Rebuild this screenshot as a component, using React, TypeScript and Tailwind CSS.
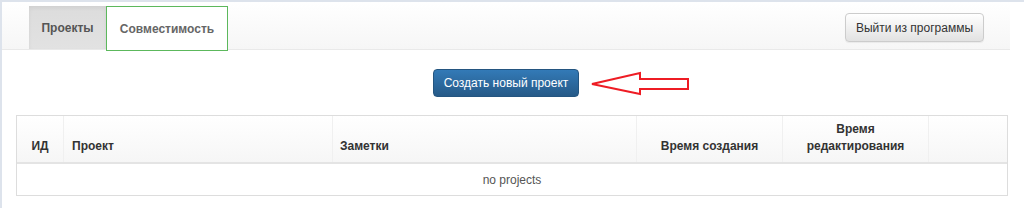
import React from "react";

export default function App() {
  return (
    <div
      className="w-[1024px] h-[208px] bg-white border-l-2 border-t-2 border-[#dde3ec] overflow-hidden"
      style={{ fontFamily: '"Liberation Sans", Arial, sans-serif' }}
    >
      <div className="w-[1008px]">
        {/* Navbar */}
        <div className="h-[48px] bg-gradient-to-b from-white to-[#f6f6f6] border-b border-[#e9e9e9] flex items-start pl-[27px] pr-[26px] pt-[4px]">
          <div className="h-[43px] w-[77px] bg-gradient-to-b from-[#dcdcdc] to-[#e2e2e2] flex items-center justify-center text-[12px] font-bold text-[#555] shadow-[inset_0_2px_4px_rgba(0,0,0,0.06)]">
            Проекты
          </div>
          <div className="h-[45px] w-[122px] border border-[#5cb85c] flex items-center justify-center text-[12px] font-bold text-[#666] bg-white">
            Совместимость
          </div>
          <div className="flex-1" />
          <button className="mt-[7px] h-[29px] w-[139px] rounded-[4px] border border-[#ccc] bg-gradient-to-b from-white to-[#e2e2e2] text-[12px] text-[#333] shadow-[0_1px_1px_rgba(0,0,0,0.06)]">
            Выйти из программы
          </button>
        </div>

        {/* Create button */}
        <div className="flex justify-center mt-[19px]">
          <div className="relative">
            <button className="h-[28px] w-[146px] rounded-[4px] border border-[#245580] bg-gradient-to-b from-[#337ab7] to-[#265a88] text-white text-[12px]">
              Создать новый проект
            </button>
            <svg
              className="absolute left-[157px] top-[1px]"
              width="104"
              height="28"
              viewBox="0 0 104 28"
            >
              <polygon
                points="2,14 50,3 50,9 98,9 98,19 50,19 50,24"
                fill="none"
                stroke="#ee1c24"
                strokeWidth="2"
                strokeLinejoin="miter"
              />
            </svg>
          </div>
        </div>

        {/* Table */}
        <div className="ml-[14px] mt-[18px] w-[992px] border border-[#dddddd]">
          <div className="flex h-[48px] bg-gradient-to-b from-white to-[#f6f6f6] border-b-2 border-[#e4e4e4] text-[12px] font-bold text-[#333] leading-[17px]">
            <div className="w-[47px] flex items-end justify-center pb-[7px] border-r border-[#f0f0f0]">ИД</div>
            <div className="w-[269px] flex items-end pl-[8px] pb-[7px] border-r border-[#f0f0f0]">Проект</div>
            <div className="w-[304px] flex items-end pl-[7px] pb-[7px] border-r border-[#f0f0f0]">Заметки</div>
            <div className="w-[146px] flex items-end justify-center pb-[7px] border-r border-[#f0f0f0]">Время создания</div>
            <div className="w-[146px] flex items-end justify-center text-center pb-[7px] border-r border-[#f0f0f0]">
              Время<br />редактирования
            </div>
            <div className="flex-1" />
          </div>
          <div className="h-[31px] flex items-center justify-center text-[12px] text-[#555]">
            no projects
          </div>
        </div>
      </div>
    </div>
  );
}
